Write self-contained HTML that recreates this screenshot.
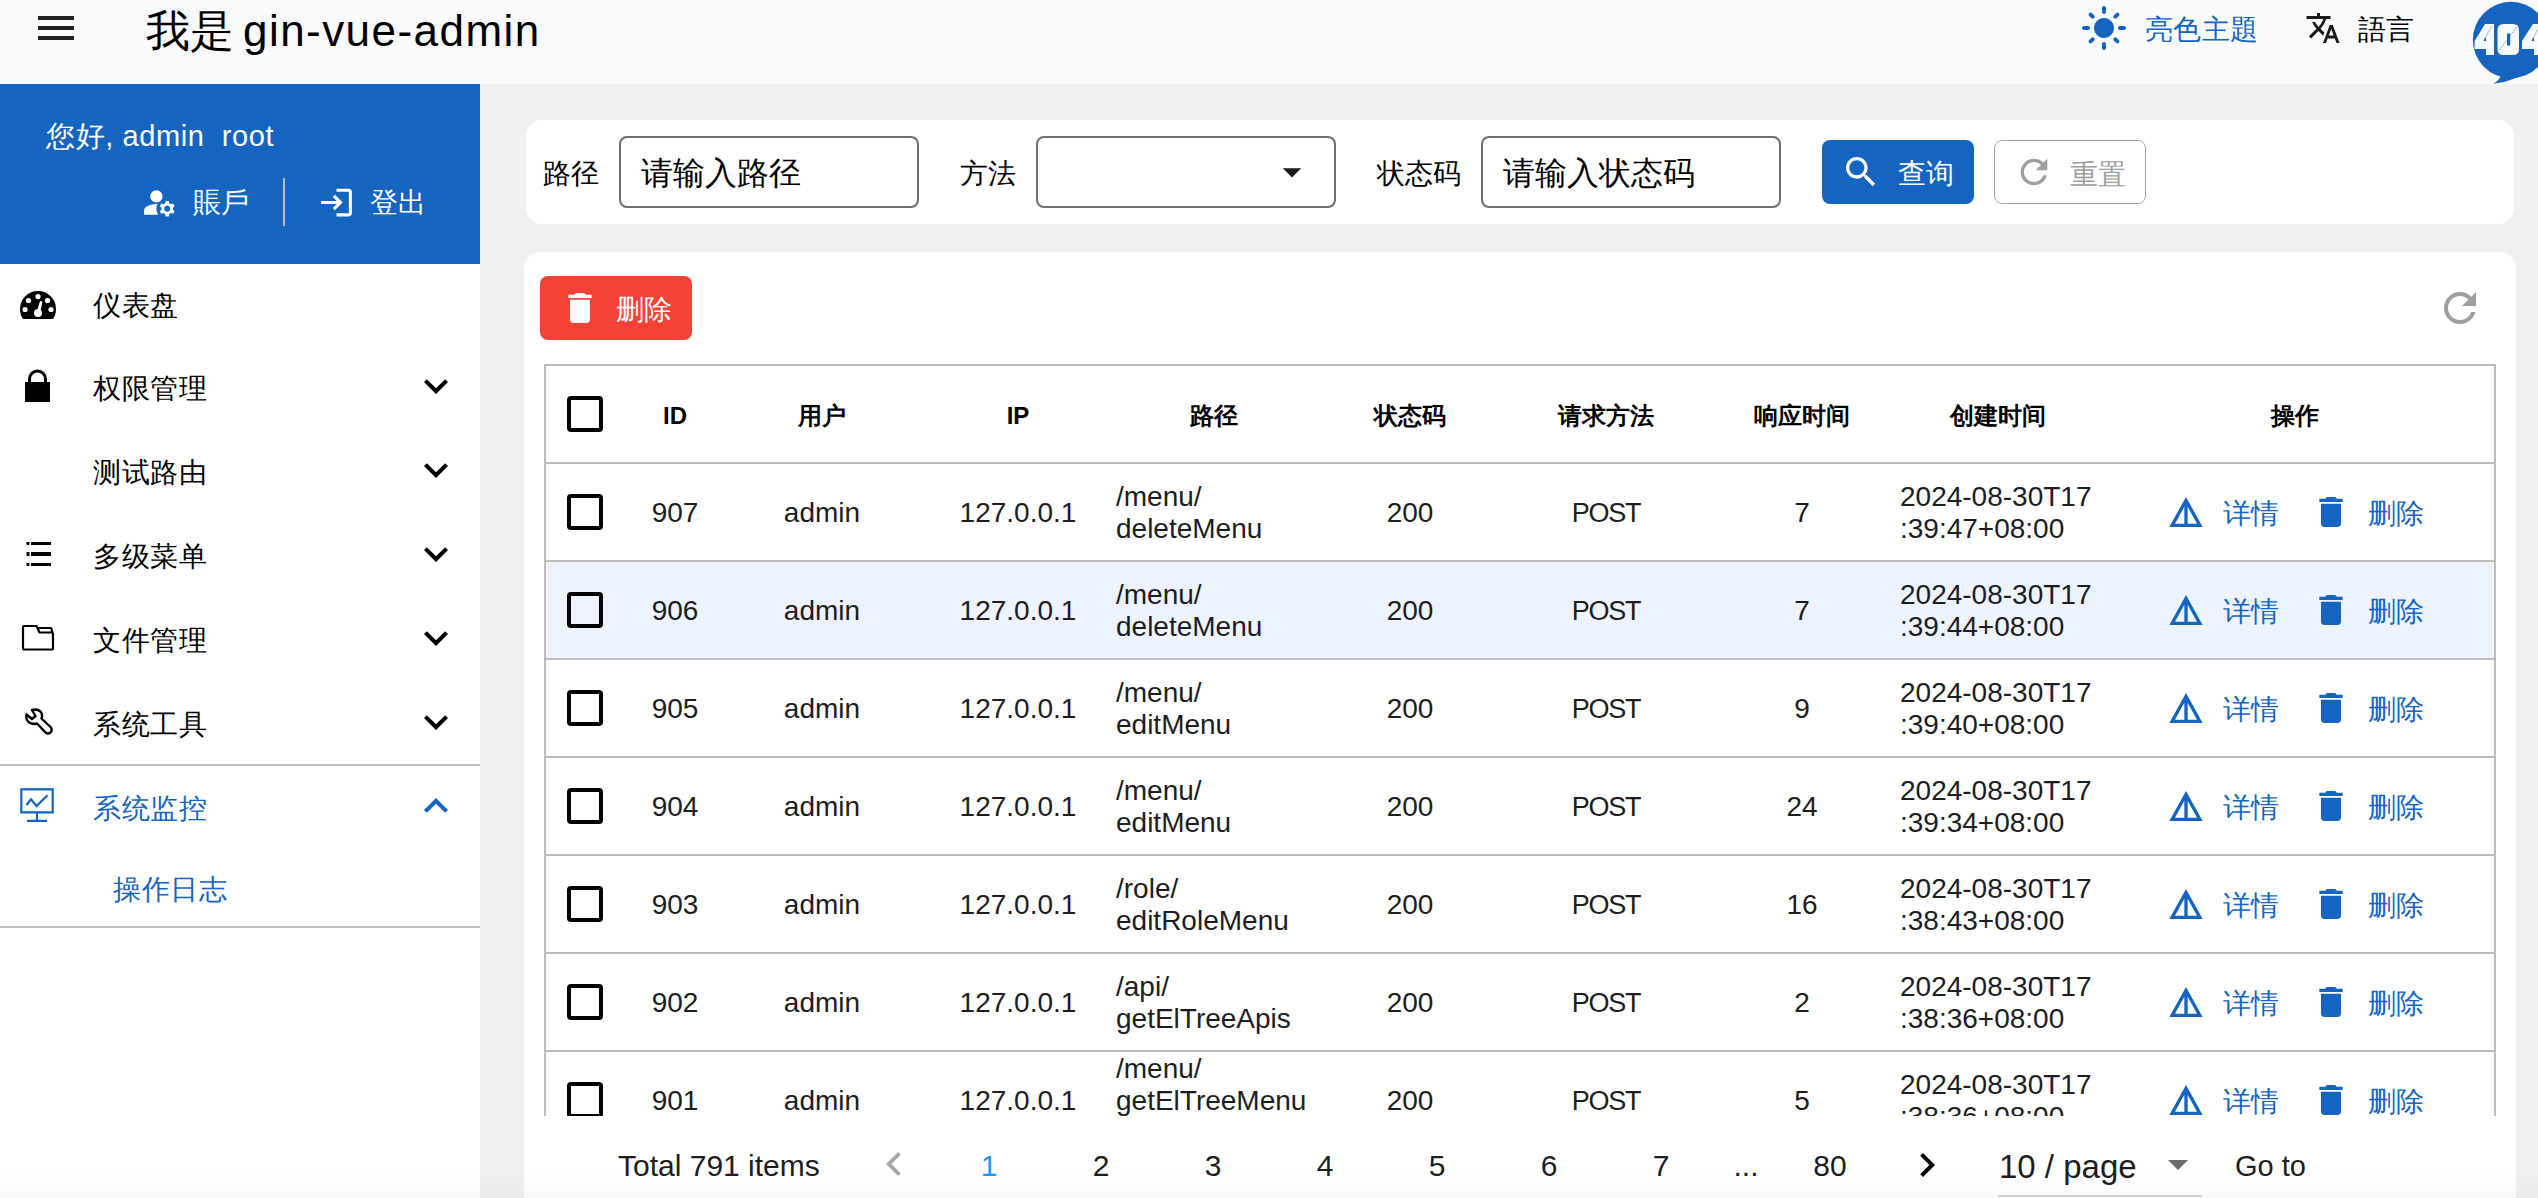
<!DOCTYPE html>
<html lang="zh">
<head>
<meta charset="utf-8">
<title>gin-vue-admin</title>
<style>
*{box-sizing:border-box;margin:0;padding:0}
html,body{width:2538px;height:1198px;overflow:hidden;background:#eff0f2;font-family:"Liberation Sans",sans-serif;color:#000}
.abs{position:absolute}
svg{display:block}
/* header */
#hdr{position:absolute;left:0;top:0;width:2538px;height:84px;background:#f9fafc}
#title{position:absolute;left:146px;top:0;height:62px;line-height:62px;font-size:44px;white-space:nowrap;letter-spacing:0}
.t{position:absolute;white-space:nowrap;line-height:1}
/* sidebar */
#side{position:absolute;left:0;top:84px;width:480px;height:1114px;background:#fff}
#user{position:absolute;left:0;top:0;width:480px;height:180px;background:#1565c0;color:#fff}
.mi{position:absolute;left:0;width:480px;height:84px}
.mi .lbl{position:absolute;left:93px;top:0;height:84px;line-height:84px;font-size:28px;letter-spacing:0.5px;white-space:nowrap}
.mi svg.chev{position:absolute;left:412px;top:15px}
.sep{position:absolute;left:0;width:480px;height:2px;background:#bfbfbf}
.blue{color:#1565c0}
/* search card */
#search{position:absolute;left:526px;top:120px;width:1988px;height:104px;background:#fff;border-radius:16px}
.inp{position:absolute;top:136px;height:72px;width:300px;border:2px solid #6f6f6f;border-radius:8px;background:#fff}
.inp span{position:absolute;left:20px;top:0;line-height:71px;font-size:32px;white-space:nowrap}
.flbl{position:absolute;top:138px;line-height:71px;font-size:28px;white-space:nowrap}
.btn{position:absolute;top:140px;height:64px;width:152px;border-radius:8px}
/* table card */
#card{position:absolute;left:524px;top:252px;width:1992px;height:1000px;background:#fff;border-radius:16px}
#tbl{position:absolute;left:544px;top:364px;width:1952px;height:752px;overflow:hidden;border:2px solid #bdbdbd;border-bottom:none}
.row{position:absolute;left:0;width:1948px;height:98px;border-top:2px solid #bdbdbd}
.cb{position:absolute;left:21px;width:36px;height:36px;border:4px solid #000;border-radius:4px}
.c{position:absolute;top:1px;height:96px;display:flex;align-items:center;justify-content:center;font-size:28px;white-space:nowrap;color:#1d1d1d}
.c.l{justify-content:flex-start;line-height:32px;white-space:normal}
.h .c{font-weight:bold;font-size:24px;color:#000;top:2px}
.act{position:absolute;top:0;height:96px;color:#1565c0;font-size:28px;line-height:96px;white-space:nowrap}
.pg{position:absolute;top:1141px;height:50px;line-height:50px;font-size:30px;white-space:nowrap;color:#1d1d1d}
</style>
</head>
<body>
<div id="hdr">
<svg class="abs" style="left:32px;top:4px" width="48" height="48" viewBox="0 0 24 24"><path d="M3 18h18v-2H3v2zm0-5h18v-2H3v2zm0-7v2h18V6H3z" fill="#1f1f1f"/></svg>
<div id="title">我是<span style="letter-spacing:1.45px;margin-left:9px">gin-vue-admin</span></div>
<svg class="abs" style="left:2080px;top:4px" width="48" height="48" viewBox="0 0 24 24"><path d="M12 7c-2.76 0-5 2.24-5 5s2.24 5 5 5 5-2.24 5-5-2.24-5-5-5zM2 13h2c.55 0 1-.45 1-1s-.45-1-1-1H2c-.55 0-1 .45-1 1s.45 1 1 1zm18 0h2c.55 0 1-.45 1-1s-.45-1-1-1h-2c-.55 0-1 .45-1 1s.45 1 1 1zM11 2v2c0 .55.45 1 1 1s1-.45 1-1V2c0-.55-.45-1-1-1s-1 .45-1 1zm0 18v2c0 .55.45 1 1 1s1-.45 1-1v-2c0-.55-.45-1-1-1s-1 .45-1 1zM5.99 4.58c-.39-.39-1.03-.39-1.41 0-.39.39-.39 1.03 0 1.41l1.06 1.06c.39.39 1.03.39 1.41 0s.39-1.03 0-1.41L5.99 4.58zm12.37 12.37c-.39-.39-1.03-.39-1.41 0-.39.39-.39 1.03 0 1.41l1.06 1.06c.39.39 1.03.39 1.41 0 .39-.39.39-1.03 0-1.41l-1.06-1.06zm1.06-10.96c.39-.39.39-1.03 0-1.41-.39-.39-1.03-.39-1.41 0l-1.06 1.06c-.39.39-.39 1.03 0 1.41s1.03.39 1.41 0l1.06-1.06zM7.05 18.36c.39-.39.39-1.03 0-1.41-.39-.39-1.03-.39-1.41 0l-1.06 1.06c-.39.39-.39 1.03 0 1.41s1.03.39 1.41 0l1.06-1.06z" fill="#1565c0"/></svg>
<div class="t blue" style="left:2145px;top:15px;font-size:28px;line-height:30px;letter-spacing:.3px">亮色主題</div>
<svg class="abs" style="left:2305px;top:10px" width="36" height="36" viewBox="0 0 24 24"><path d="M12.87 15.07l-2.54-2.51.03-.03c1.74-1.94 2.98-4.17 3.71-6.53H17V4h-7V2H8v2H1v1.99h11.17C11.5 7.92 10.44 9.75 9 11.35 8.07 10.32 7.3 9.19 6.69 8h-2c.73 1.63 1.73 3.17 2.98 4.56l-5.09 5.02L4 19l5-5 3.11 3.11.76-2.04zM18.5 10h-2L12 22h2l1.12-3h4.75L21 22h2l-4.5-12zm-2.62 7l1.62-4.33L19.12 17h-3.24z" fill="#1a1a1a"/></svg>
<div class="t" style="left:2358px;top:15px;font-size:28px;line-height:30px">語言</div>
<svg class="abs" style="left:2460px;top:0" width="78" height="84" viewBox="2460 0 78 84"><circle cx="2511" cy="40" r="38.2" fill="#1565c0"/><path d="M2501 74 Q2500 80.5 2493 83.8 Q2516 82 2540 64 L2520 60 Z" fill="#1565c0"/><g fill="#f6f9fd"><path d="M2485 24 H2494 V55 H2486 V49 H2474.6 V41 Z M2486 37 L2483.4 41 H2486 Z"/><path d="M2503.5 24 h9.5 q6 0 6 6 v19 q0 6 -6 6 h-9.5 q-6 0 -6 -6 v-19 q0 -6 6 -6 Z M2507 33.5 v12 h3.2 v-12 Z" fill-rule="evenodd"/><path d="M2533 24 H2542 V55 H2534 V49 H2522 V41 Z M2534 37 L2531.4 41 H2534 Z"/></g><g stroke="#1565c0" stroke-width=".6" stroke-dasharray="2 1"><path d="M2484.3 39.5 L2492 26"/><path d="M2499.4 50 L2517.7 26"/><path d="M2532.3 39.5 L2540 26"/></g></svg>
</div>
<div id="side">
<div id="user">
<div class="t" style="left:46px;top:37px;font-size:29px;line-height:30px;letter-spacing:.6px">您好, admin&nbsp; root</div>
<svg class="abs" style="left:141px;top:100px" width="37" height="37" viewBox="0 0 24 24"><circle cx="10" cy="8" r="4" fill="#fff"/><path d="M10.67 13.02c-.22-.01-.44-.02-.67-.02-2.42 0-4.68.67-6.61 1.82-.88.52-1.39 1.5-1.39 2.53V20h9.26c-.79-1.13-1.26-2.51-1.26-4 0-1.07.25-2.07.67-2.98zM20.75 16c0-.22-.03-.42-.06-.63l1.14-1.01-1-1.73-1.45.49c-.32-.27-.68-.48-1.08-.63L18 11h-2l-.3 1.49c-.4.15-.76.36-1.08.63l-1.45-.49-1 1.73 1.14 1.01c-.03.21-.06.41-.06.63s.03.42.06.63l-1.14 1.01 1 1.73 1.45-.49c.32.27.68.48 1.08.63L16 21h2l.3-1.49c.4-.15.76-.36 1.08-.63l1.45.49 1-1.73-1.14-1.01c.03-.21.06-.41.06-.63zM17 18c-1.1 0-2-.9-2-2s.9-2 2-2 2 .9 2 2-.9 2-2 2z" fill="#fff"/></svg>
<div class="t" style="left:193px;top:104px;font-size:28px;line-height:30px">賬戶</div>
<div class="abs" style="left:283px;top:94px;width:2px;height:48px;background:#b4bccb"></div>
<svg class="abs" style="left:318px;top:100px" width="37" height="37" viewBox="0 0 24 24"><path d="M11 7L9.6 8.4l2.6 2.6H2v2h10.2l-2.6 2.6L11 17l5-5-5-5zm9 12h-8v2h8c1.1 0 2-.9 2-2V5c0-1.1-.9-2-2-2h-8v2h8v14z" fill="#fff"/></svg>
<div class="t" style="left:370px;top:104px;font-size:28px;line-height:30px">登出</div>
</div>
<div class="mi" style="top:180px">
<svg class="abs" style="left:20px;top:27px" width="36" height="29" viewBox="0 0 36 29"><path d="M3 28 Q0 24 0 18 A18 18 0 0 1 36 18 Q36 24 33 28 Z" fill="#000"/><g fill="#fff"><circle cx="18" cy="5.5" r="2.6"/><circle cx="8.5" cy="9.5" r="2.6"/><circle cx="27.5" cy="9.5" r="2.6"/><circle cx="5" cy="18.5" r="2.6"/><circle cx="31" cy="18.5" r="2.6"/><circle cx="18" cy="22" r="4"/><path d="M17 20 L20 10 L22.4 10.6 L20.4 21 Z"/></g></svg>
<div class="lbl">仪表盘</div>
</div>
<div class="mi" style="top:263px">
<svg class="abs" style="left:24px;top:22px" width="28" height="34" viewBox="0 0 28 34"><rect x="1" y="13" width="25" height="20" fill="#000"/><path d="M5.5 14 V10 a8 8 0 0 1 16 0 V14" fill="none" stroke="#000" stroke-width="3"/></svg>
<div class="lbl">权限管理</div>
<svg class="chev" width="48" height="48" viewBox="0 0 24 24"><path d="M16.59 8.59L12 13.17 7.41 8.59 6 10l6 6 6-6z" fill="#000"/></svg>
</div>
<div class="mi" style="top:347px">
<div class="lbl">测试路由</div>
<svg class="chev" width="48" height="48" viewBox="0 0 24 24"><path d="M16.59 8.59L12 13.17 7.41 8.59 6 10l6 6 6-6z" fill="#000"/></svg>
</div>
<div class="mi" style="top:431px">
<svg class="abs" style="left:26px;top:27px" width="26" height="26" viewBox="0 0 26 26"><g fill="#000"><rect x="0.5" y="0" width="3" height="3"/><rect x="5" y="0" width="20" height="3"/><rect x="0.5" y="10" width="3" height="4"/><rect x="5" y="10" width="20" height="4"/><rect x="0.5" y="21" width="3" height="3"/><rect x="5" y="21" width="20" height="3"/></g></svg>
<div class="lbl">多级菜单</div>
<svg class="chev" width="48" height="48" viewBox="0 0 24 24"><path d="M16.59 8.59L12 13.17 7.41 8.59 6 10l6 6 6-6z" fill="#000"/></svg>
</div>
<div class="mi" style="top:515px">
<svg class="abs" style="left:21px;top:25px" width="34" height="28" viewBox="0 0 34 28"><path d="M2.5 2 H15.5 L18.5 8.5 H30.5 Q32 8.5 32 10 V24 Q32 25.5 30.5 25.5 H3.5 Q2 25.5 2 24 V3.5 Q2 2 3.5 2 Z M17 4 H29.5 Q30.5 4 30.5 5 L31.5 9" fill="none" stroke="#000" stroke-width="2.2" stroke-linejoin="round"/></svg>
<div class="lbl">文件管理</div>
<svg class="chev" width="48" height="48" viewBox="0 0 24 24"><path d="M16.59 8.59L12 13.17 7.41 8.59 6 10l6 6 6-6z" fill="#000"/></svg>
</div>
<div class="mi" style="top:599px">
<svg class="abs" style="left:24px;top:25px" width="30" height="30" viewBox="0 0 30 30"><path d="M8 2 Q13 0.5 16.5 3.5 Q19 6.5 17.5 10.5 L27 19.5 Q28.5 22 26.5 24.5 Q24 26.5 21.5 24.5 L13 15.5 Q8.5 17 4.5 14 Q1.5 11 2.5 6.5 L8 11 L11.5 8 Z" fill="none" stroke="#000" stroke-width="2.4" stroke-linejoin="round"/></svg>
<div class="lbl">系统工具</div>
<svg class="chev" width="48" height="48" viewBox="0 0 24 24"><path d="M16.59 8.59L12 13.17 7.41 8.59 6 10l6 6 6-6z" fill="#000"/></svg>
</div>
<div class="sep" style="top:680px"></div>
<div class="mi" style="top:683px"><svg class="abs" style="left:20px;top:21px" width="36" height="37" viewBox="0 0 36 36" preserveAspectRatio="none"><g fill="none" stroke="#1565c0" stroke-width="2.2"><rect x="1.3" y="1.3" width="31.4" height="22.4"/><path d="M17 24 V32 M7 32 H27"/><path d="M6.5 16.5 L11 11 L16.5 17.5 L27.5 7"/></g></svg><div class="lbl blue">系统监控</div><svg class="chev" width="48" height="48" viewBox="0 0 24 24"><path d="M12 8l-6 6 1.41 1.41L12 10.83l4.59 4.59L18 14z" fill="#1565c0"/></svg></div>
<div class="mi" style="top:764px"><div class="lbl blue" style="left:113px">操作日志</div></div>
<div class="sep" style="top:842px"></div>
</div>
<div id="search"></div>
<div class="flbl" style="left:543px">路径</div>
<div class="inp" style="left:619px"><span>请输入路径</span></div>
<div class="flbl" style="left:960px">方法</div>
<div class="inp" style="left:1036px"><svg class="abs" style="left:232px;top:12px" width="44" height="44" viewBox="0 0 24 24"><path d="M7 10l5 5 5-5z" fill="#1a1a1a"/></svg></div>
<div class="flbl" style="left:1377px">状态码</div>
<div class="inp" style="left:1481px"><span>请输入状态码</span></div>
<div class="btn" style="left:1822px;background:#1565c0"><svg class="abs" style="left:19px;top:12px" width="40" height="40" viewBox="0 0 24 24"><path d="M15.5 14h-.79l-.28-.27C15.41 12.59 16 11.11 16 9.5 16 5.91 13.09 3 9.5 3S3 5.91 3 9.5 5.91 16 9.5 16c1.61 0 3.09-.59 4.23-1.57l.27.28v.79l5 4.99L20.49 19l-4.99-5zm-6 0C7.01 14 5 11.99 5 9.5S7.01 5 9.5 5 14 7.01 14 9.5 11.99 14 9.5 14z" fill="#fff"/></svg><div class="t" style="left:76px;top:19px;font-size:28px;line-height:30px;color:#fff">查询</div></div>
<div class="btn" style="left:1994px;background:#fff;border:1px solid #a3a3a3"><svg class="abs" style="left:19px;top:11px" width="40" height="40" viewBox="0 0 24 24"><path d="M17.65 6.35C16.2 4.9 14.21 4 12 4c-4.42 0-7.99 3.58-7.99 8s3.57 8 7.99 8c3.73 0 6.84-2.55 7.73-6h-2.08c-.82 2.33-3.04 4-5.65 4-3.31 0-6-2.69-6-6s2.69-6 6-6c1.66 0 3.14.69 4.22 1.78L13 11h7V4l-2.35 2.35z" fill="#9e9e9e"/></svg><div class="t" style="left:75px;top:19px;font-size:28px;line-height:30px;color:#9e9e9e">重置</div></div>
<div id="card"></div>
<div class="btn" style="left:540px;top:276px;background:#f44336"><svg class="abs" style="left:20px;top:12px" width="40" height="40" viewBox="0 0 24 24"><path d="M6 19c0 1.1.9 2 2 2h8c1.1 0 2-.9 2-2V7H6v12zM19 4h-3.5l-1-1h-5l-1 1H5v2h14V4z" fill="#fff"/></svg><div class="t" style="left:76px;top:19px;font-size:28px;line-height:30px;color:#fff">删除</div></div>
<svg class="abs" style="left:2436px;top:284px" width="48" height="48" viewBox="0 0 24 24"><path d="M17.65 6.35C16.2 4.9 14.21 4 12 4c-4.42 0-7.99 3.58-7.99 8s3.57 8 7.99 8c3.73 0 6.84-2.55 7.73-6h-2.08c-.82 2.33-3.04 4-5.65 4-3.31 0-6-2.69-6-6s2.69-6 6-6c1.66 0 3.14.69 4.22 1.78L13 11h7V4l-2.35 2.35z" fill="#9e9e9e"/></svg>
<div id="tbl">
<div class="row h" style="top:-2px">
<div class="cb" style="top:30px"></div>
<div class="c" style="left:80px;width:98px">ID</div>
<div class="c" style="left:178px;width:196px">用户</div>
<div class="c" style="left:374px;width:196px">IP</div>
<div class="c" style="left:570px;width:196px">路径</div>
<div class="c" style="left:766px;width:196px">状态码</div>
<div class="c" style="left:962px;width:196px">请求方法</div>
<div class="c" style="left:1158px;width:196px">响应时间</div>
<div class="c" style="left:1354px;width:196px">创建时间</div>
<div class="c" style="left:1550px;width:397px">操作</div>
</div>
<div class="row" style="top:96px">
<div class="cb" style="top:30px"></div>
<div class="c" style="left:80px;width:98px">907</div>
<div class="c" style="left:178px;width:196px">admin</div>
<div class="c" style="left:374px;width:196px">127.0.0.1</div>
<div class="c l" style="left:570px;width:196px"><div>/menu/<br>deleteMenu</div></div>
<div class="c" style="left:766px;width:196px">200</div>
<div class="c" style="left:962px;width:196px;letter-spacing:-1.2px;font-size:27px">POST</div>
<div class="c" style="left:1158px;width:196px">7</div>
<div class="c l" style="left:1354px;width:206px"><div>2024-08-30T17<br>:39:47+08:00</div></div>
<div class="act" style="left:1623px"><svg class="abs" style="left:-3px;top:28px" width="40" height="40" viewBox="0 0 24 24"><path d="M12 3L2 21h20L12 3zm1 5.92L18.6 19H13V8.92zm-2 0V19H5.4L11 8.92z" fill="#1565c0"/></svg><span style="position:absolute;left:54px;top:2px">详情</span><svg class="abs" style="left:142px;top:28px" width="40" height="40" viewBox="0 0 24 24"><path d="M6 19c0 1.1.9 2 2 2h8c1.1 0 2-.9 2-2V7H6v12zM19 4h-3.5l-1-1h-5l-1 1H5v2h14V4z" fill="#1565c0"/></svg><span style="position:absolute;left:199px;top:2px">删除</span></div>
</div>
<div class="row" style="top:194px;background:#ecf3fc">
<div class="cb" style="top:30px"></div>
<div class="c" style="left:80px;width:98px">906</div>
<div class="c" style="left:178px;width:196px">admin</div>
<div class="c" style="left:374px;width:196px">127.0.0.1</div>
<div class="c l" style="left:570px;width:196px"><div>/menu/<br>deleteMenu</div></div>
<div class="c" style="left:766px;width:196px">200</div>
<div class="c" style="left:962px;width:196px;letter-spacing:-1.2px;font-size:27px">POST</div>
<div class="c" style="left:1158px;width:196px">7</div>
<div class="c l" style="left:1354px;width:206px"><div>2024-08-30T17<br>:39:44+08:00</div></div>
<div class="act" style="left:1623px"><svg class="abs" style="left:-3px;top:28px" width="40" height="40" viewBox="0 0 24 24"><path d="M12 3L2 21h20L12 3zm1 5.92L18.6 19H13V8.92zm-2 0V19H5.4L11 8.92z" fill="#1565c0"/></svg><span style="position:absolute;left:54px;top:2px">详情</span><svg class="abs" style="left:142px;top:28px" width="40" height="40" viewBox="0 0 24 24"><path d="M6 19c0 1.1.9 2 2 2h8c1.1 0 2-.9 2-2V7H6v12zM19 4h-3.5l-1-1h-5l-1 1H5v2h14V4z" fill="#1565c0"/></svg><span style="position:absolute;left:199px;top:2px">删除</span></div>
</div>
<div class="row" style="top:292px">
<div class="cb" style="top:30px"></div>
<div class="c" style="left:80px;width:98px">905</div>
<div class="c" style="left:178px;width:196px">admin</div>
<div class="c" style="left:374px;width:196px">127.0.0.1</div>
<div class="c l" style="left:570px;width:196px"><div>/menu/<br>editMenu</div></div>
<div class="c" style="left:766px;width:196px">200</div>
<div class="c" style="left:962px;width:196px;letter-spacing:-1.2px;font-size:27px">POST</div>
<div class="c" style="left:1158px;width:196px">9</div>
<div class="c l" style="left:1354px;width:206px"><div>2024-08-30T17<br>:39:40+08:00</div></div>
<div class="act" style="left:1623px"><svg class="abs" style="left:-3px;top:28px" width="40" height="40" viewBox="0 0 24 24"><path d="M12 3L2 21h20L12 3zm1 5.92L18.6 19H13V8.92zm-2 0V19H5.4L11 8.92z" fill="#1565c0"/></svg><span style="position:absolute;left:54px;top:2px">详情</span><svg class="abs" style="left:142px;top:28px" width="40" height="40" viewBox="0 0 24 24"><path d="M6 19c0 1.1.9 2 2 2h8c1.1 0 2-.9 2-2V7H6v12zM19 4h-3.5l-1-1h-5l-1 1H5v2h14V4z" fill="#1565c0"/></svg><span style="position:absolute;left:199px;top:2px">删除</span></div>
</div>
<div class="row" style="top:390px">
<div class="cb" style="top:30px"></div>
<div class="c" style="left:80px;width:98px">904</div>
<div class="c" style="left:178px;width:196px">admin</div>
<div class="c" style="left:374px;width:196px">127.0.0.1</div>
<div class="c l" style="left:570px;width:196px"><div>/menu/<br>editMenu</div></div>
<div class="c" style="left:766px;width:196px">200</div>
<div class="c" style="left:962px;width:196px;letter-spacing:-1.2px;font-size:27px">POST</div>
<div class="c" style="left:1158px;width:196px">24</div>
<div class="c l" style="left:1354px;width:206px"><div>2024-08-30T17<br>:39:34+08:00</div></div>
<div class="act" style="left:1623px"><svg class="abs" style="left:-3px;top:28px" width="40" height="40" viewBox="0 0 24 24"><path d="M12 3L2 21h20L12 3zm1 5.92L18.6 19H13V8.92zm-2 0V19H5.4L11 8.92z" fill="#1565c0"/></svg><span style="position:absolute;left:54px;top:2px">详情</span><svg class="abs" style="left:142px;top:28px" width="40" height="40" viewBox="0 0 24 24"><path d="M6 19c0 1.1.9 2 2 2h8c1.1 0 2-.9 2-2V7H6v12zM19 4h-3.5l-1-1h-5l-1 1H5v2h14V4z" fill="#1565c0"/></svg><span style="position:absolute;left:199px;top:2px">删除</span></div>
</div>
<div class="row" style="top:488px">
<div class="cb" style="top:30px"></div>
<div class="c" style="left:80px;width:98px">903</div>
<div class="c" style="left:178px;width:196px">admin</div>
<div class="c" style="left:374px;width:196px">127.0.0.1</div>
<div class="c l" style="left:570px;width:196px"><div>/role/<br>editRoleMenu</div></div>
<div class="c" style="left:766px;width:196px">200</div>
<div class="c" style="left:962px;width:196px;letter-spacing:-1.2px;font-size:27px">POST</div>
<div class="c" style="left:1158px;width:196px">16</div>
<div class="c l" style="left:1354px;width:206px"><div>2024-08-30T17<br>:38:43+08:00</div></div>
<div class="act" style="left:1623px"><svg class="abs" style="left:-3px;top:28px" width="40" height="40" viewBox="0 0 24 24"><path d="M12 3L2 21h20L12 3zm1 5.92L18.6 19H13V8.92zm-2 0V19H5.4L11 8.92z" fill="#1565c0"/></svg><span style="position:absolute;left:54px;top:2px">详情</span><svg class="abs" style="left:142px;top:28px" width="40" height="40" viewBox="0 0 24 24"><path d="M6 19c0 1.1.9 2 2 2h8c1.1 0 2-.9 2-2V7H6v12zM19 4h-3.5l-1-1h-5l-1 1H5v2h14V4z" fill="#1565c0"/></svg><span style="position:absolute;left:199px;top:2px">删除</span></div>
</div>
<div class="row" style="top:586px">
<div class="cb" style="top:30px"></div>
<div class="c" style="left:80px;width:98px">902</div>
<div class="c" style="left:178px;width:196px">admin</div>
<div class="c" style="left:374px;width:196px">127.0.0.1</div>
<div class="c l" style="left:570px;width:196px"><div>/api/<br>getElTreeApis</div></div>
<div class="c" style="left:766px;width:196px">200</div>
<div class="c" style="left:962px;width:196px;letter-spacing:-1.2px;font-size:27px">POST</div>
<div class="c" style="left:1158px;width:196px">2</div>
<div class="c l" style="left:1354px;width:206px"><div>2024-08-30T17<br>:38:36+08:00</div></div>
<div class="act" style="left:1623px"><svg class="abs" style="left:-3px;top:28px" width="40" height="40" viewBox="0 0 24 24"><path d="M12 3L2 21h20L12 3zm1 5.92L18.6 19H13V8.92zm-2 0V19H5.4L11 8.92z" fill="#1565c0"/></svg><span style="position:absolute;left:54px;top:2px">详情</span><svg class="abs" style="left:142px;top:28px" width="40" height="40" viewBox="0 0 24 24"><path d="M6 19c0 1.1.9 2 2 2h8c1.1 0 2-.9 2-2V7H6v12zM19 4h-3.5l-1-1h-5l-1 1H5v2h14V4z" fill="#1565c0"/></svg><span style="position:absolute;left:199px;top:2px">删除</span></div>
</div>
<div class="row" style="top:684px">
<div class="cb" style="top:30px"></div>
<div class="c" style="left:80px;width:98px">901</div>
<div class="c" style="left:178px;width:196px">admin</div>
<div class="c" style="left:374px;width:196px">127.0.0.1</div>
<div class="c l" style="left:570px;width:196px"><div>/menu/<br>getElTreeMenu<br>&nbsp;</div></div>
<div class="c" style="left:766px;width:196px">200</div>
<div class="c" style="left:962px;width:196px;letter-spacing:-1.2px;font-size:27px">POST</div>
<div class="c" style="left:1158px;width:196px">5</div>
<div class="c l" style="left:1354px;width:206px"><div>2024-08-30T17<br>:38:36+08:00</div></div>
<div class="act" style="left:1623px"><svg class="abs" style="left:-3px;top:28px" width="40" height="40" viewBox="0 0 24 24"><path d="M12 3L2 21h20L12 3zm1 5.92L18.6 19H13V8.92zm-2 0V19H5.4L11 8.92z" fill="#1565c0"/></svg><span style="position:absolute;left:54px;top:2px">详情</span><svg class="abs" style="left:142px;top:28px" width="40" height="40" viewBox="0 0 24 24"><path d="M6 19c0 1.1.9 2 2 2h8c1.1 0 2-.9 2-2V7H6v12zM19 4h-3.5l-1-1h-5l-1 1H5v2h14V4z" fill="#1565c0"/></svg><span style="position:absolute;left:199px;top:2px">删除</span></div>
</div>
</div>
<div class="pg" style="left:618px">Total 791 items</div>
<svg class="abs" style="left:870px;top:1140px" width="48" height="48" viewBox="0 0 24 24"><path d="M15.41 7.41L14 6l-6 6 6 6 1.41-1.41L10.83 12z" fill="#a8a8a8"/></svg>
<div class="pg" style="left:949px;width:80px;text-align:center;color:#2196f3">1</div>
<div class="pg" style="left:1061px;width:80px;text-align:center">2</div>
<div class="pg" style="left:1173px;width:80px;text-align:center">3</div>
<div class="pg" style="left:1285px;width:80px;text-align:center">4</div>
<div class="pg" style="left:1397px;width:80px;text-align:center">5</div>
<div class="pg" style="left:1509px;width:80px;text-align:center">6</div>
<div class="pg" style="left:1621px;width:80px;text-align:center">7</div>
<div class="pg" style="left:1706px;width:80px;text-align:center">...</div>
<div class="pg" style="left:1790px;width:80px;text-align:center">80</div>
<svg class="abs" style="left:1903px;top:1141px" width="48" height="48" viewBox="0 0 24 24"><path d="M10 6L8.59 7.41 13.17 12l-4.58 4.59L10 18l6-6z" fill="#000"/></svg>
<div class="pg" style="left:1999px;font-size:33px;top:1142px">10 / page</div>
<svg class="abs" style="left:2154px;top:1140px" width="48" height="48" viewBox="0 0 24 24"><path d="M7 10l5 5 5-5z" fill="#6b6b6b"/></svg>
<div class="abs" style="left:1998px;top:1195px;width:204px;height:2px;background:#d2d2d2"></div>
<div class="pg" style="left:2235px;font-size:29px">Go to</div>
<div class="abs" style="left:0;top:1168px;width:2538px;height:30px;background:linear-gradient(to bottom,rgba(0,0,0,0),rgba(0,0,0,.022))"></div>
</body>
</html>
